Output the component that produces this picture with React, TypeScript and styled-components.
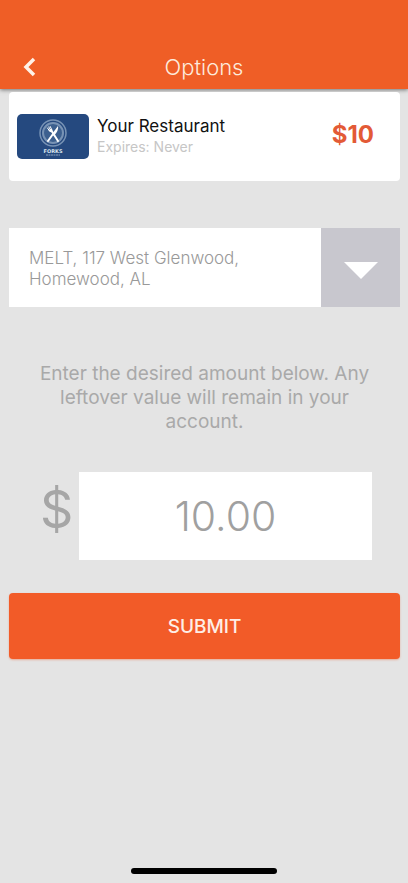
import React, { useState } from "react";
import styled, { createGlobalStyle } from "styled-components";

const GlobalStyle = createGlobalStyle`
  * { box-sizing: border-box; }
  body {
    margin: 0;
    background: #e4e4e4;
    font-family: Inter, "Liberation Sans", sans-serif;
  }
  h1, h2, p { margin: 0; font-weight: 400; }
  button, input, select { font-family: inherit; border: 0; border-radius: 0; }
`;

const Screen = styled.div`
  min-height: 100vh;
  display: flex;
  flex-direction: column;
`;

const Header = styled.header`
  display: grid;
  grid-template-columns: 60px 1fr 60px;
  align-items: center;
  height: 89px;
  padding-top: 45px;
  background: #ef5e26;
  box-shadow: 0 1px 4px rgba(0, 0, 0, 0.5);
`;

const BackButton = styled.button`
  display: flex;
  align-items: center;
  justify-content: center;
  height: 44px;
  padding: 0;
  background: transparent;
`;

const Title = styled.h1`
  color: #fdebdc;
  font-size: 22px;
  line-height: 24px;
  font-weight: 300;
  text-align: center;
`;

const Content = styled.main`
  flex: 1;
  display: flex;
  flex-direction: column;
  padding: 3px 8px 0 9px;
`;

const Card = styled.section`
  display: flex;
  align-items: center;
  gap: 8px;
  height: 89px;
  padding: 0 26px 0 8px;
  background: #fff;
  border-radius: 4px;
`;

const CardArt = styled.svg`
  flex: none;
  display: block;
`;

const CardText = styled.div`
  flex: 1;
  padding-bottom: 1px;
`;

const CardName = styled.h2`
  color: #111;
  font-size: 17px;
  line-height: 22px;
`;

const CardExpiry = styled.p`
  color: #c6c6c6;
  font-size: 14px;
  line-height: 20px;
`;

const CardValue = styled.strong`
  color: #e35a36;
  font-size: 24px;
  line-height: 28px;
  font-weight: 700;
  padding-bottom: 4px;
`;

const LocationField = styled.div`
  position: relative;
  display: flex;
  min-height: 79px;
  margin-top: 47px;
  background: #fff;
`;

const LocationValue = styled.span`
  flex: 1;
  align-self: center;
  padding: 2px 60px 0 20px;
  color: #999;
  font-size: 17px;
  line-height: 21px;
  font-weight: 300;
`;

const LocationArrow = styled.span`
  flex: none;
  display: flex;
  align-items: center;
  justify-content: center;
  width: 79px;
  padding-top: 5px;
  background: #c8c7ce;
`;

const LocationSelect = styled.select`
  position: absolute;
  inset: 0;
  width: 100%;
  opacity: 0;
  cursor: pointer;
`;

const Instructions = styled.p`
  margin-top: 55px;
  padding: 0 24px;
  color: #a9a9a9;
  font-size: 19px;
  line-height: 24px;
  text-align: center;
`;

const AmountRow = styled.div`
  display: flex;
  align-items: center;
  gap: 6px;
  margin-top: 38px;
  padding: 0 28px 0 31px;
`;

const Currency = styled.label`
  flex: none;
  width: 33px;
  padding-bottom: 13px;
  color: #a6a6a6;
  font-size: 52px;
  line-height: 56px;
  text-align: center;
`;

const AmountInput = styled.input`
  flex: 1;
  min-width: 0;
  height: 88px;
  padding: 0;
  background: #fff;
  color: #a0a0a0;
  font-size: 41px;
  font-weight: 300;
  text-align: center;
`;

const SubmitButton = styled.button`
  height: 66px;
  margin-top: 33px;
  border-radius: 4px;
  background: #f25b28;
  box-shadow: 0 1px 2px rgba(242, 91, 40, 0.4);
  color: #feeee6;
  font-size: 19px;
  font-weight: 500;
`;

const HomeIndicator = styled.div`
  align-self: center;
  width: 146px;
  height: 6px;
  margin-bottom: 9px;
  border-radius: 3px;
  background: #000;
`;

const CardLogoText = styled.text`
  font-family: "DejaVu Sans", sans-serif;
  font-weight: 700;
  text-anchor: middle;
  fill: #dce5ee;
`;

const ForksCard = () => (
  <CardArt width="72" height="45" viewBox="0 0 72 45" role="img" aria-label="Forks gift card">
    <rect width="72" height="45" rx="5" fill="#25497f" />
    <circle cx="36" cy="19" r="13" fill="none" stroke="#7893b5" strokeWidth="1.5" />
    <circle cx="36" cy="19" r="10" fill="#3d608f" stroke="#7893b5" strokeWidth="2" />
    <g transform="translate(36 19)" fill="#fff" stroke="#fff" strokeLinecap="round">
      <path d="M-2 -3 L5 8" fill="none" strokeWidth="2" />
      <path d="M-5.500 -5 L-3.500 -2 M-4.200 -6 L-2.500 -3 M-2.800 -6.500 L-1.300 -3.500" fill="none" strokeWidth="1" />
      <path d="M-4.500 -3 Q-3 0 -1 -1 Q0 -2 -1.200 -4 Z" stroke="none" />
      <path d="M-5 8 L0 1" fill="none" strokeWidth="2" />
      <path d="M-1 1 L5 -7 Q6 -3 1 3 Z" stroke="none" />
    </g>
    <CardLogoText x="36" y="39" fontSize="5">FORKS</CardLogoText>
    <path d="M29 41 H43" stroke="#8ba2bf" strokeWidth="1" strokeDasharray="2 0.500" />
  </CardArt>
);

const locations = ["MELT, 117 West Glenwood, Homewood, AL"];

export default function App() {
  const [location, setLocation] = useState(locations[0]);
  const [amount, setAmount] = useState("10.00");

  return (
    <Screen>
      <GlobalStyle />
      <Header>
        <BackButton type="button" aria-label="Back">
          <svg width="16" height="20" viewBox="0 0 16 20" fill="none" stroke="#fff2e8" strokeWidth="3.5">
            <path d="M12 2 L4 10 L12 18" />
          </svg>
        </BackButton>
        <Title>Options</Title>
      </Header>
      <Content>
        <Card>
          <ForksCard />
          <CardText>
            <CardName>Your Restaurant</CardName>
            <CardExpiry>Expires: Never</CardExpiry>
          </CardText>
          <CardValue>$10</CardValue>
        </Card>
        <LocationField>
          <LocationValue aria-hidden="true">{location}</LocationValue>
          <LocationArrow aria-hidden="true">
            <svg width="34" height="17" viewBox="0 0 34 17">
              <path d="M0 0 H34 L17 17 Z" fill="#fff" />
            </svg>
          </LocationArrow>
          <LocationSelect
            aria-label="Location"
            value={location}
            onChange={(event) => setLocation(event.target.value)}
          >
            {locations.map((name) => (
              <option key={name}>{name}</option>
            ))}
          </LocationSelect>
        </LocationField>
        <Instructions>
          Enter the desired amount below. Any leftover value will remain in your account.
        </Instructions>
        <AmountRow>
          <Currency htmlFor="amount">$</Currency>
          <AmountInput
            id="amount"
            aria-label="Amount in dollars"
            inputMode="decimal"
            value={amount}
            onChange={(event) => setAmount(event.target.value)}
          />
        </AmountRow>
        <SubmitButton type="submit">SUBMIT</SubmitButton>
      </Content>
      <HomeIndicator />
    </Screen>
  );
}
